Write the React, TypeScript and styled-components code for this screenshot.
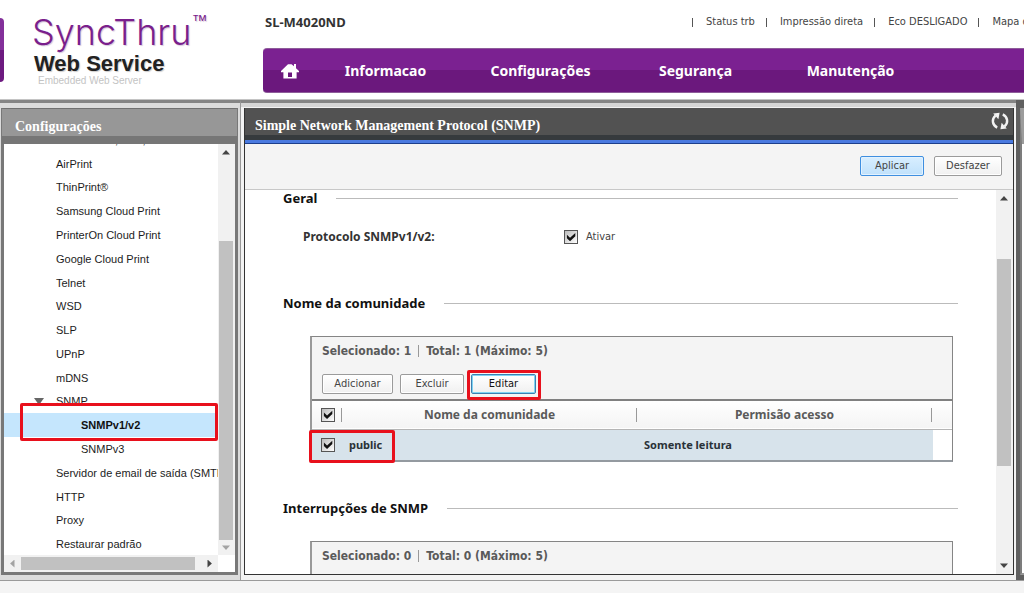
import React from "react";
import styled, { createGlobalStyle, css } from "styled-components";

const ui = `"DejaVu Sans Condensed", "Noto Sans", sans-serif`;
const uiBold = `"Noto Sans", "Open Sans", sans-serif`;

const GlobalStyle = createGlobalStyle`
  * { box-sizing: border-box; }
  body { margin: 0; background: #fff; color: #333; font: 11px/16px ${ui}; overflow: hidden; }
  h1, h2, h3, p, ul { margin: 0; padding: 0; font-size: inherit; font-weight: inherit; }
  ul { list-style: none; }
  a { color: inherit; text-decoration: none; }
`;

const Page = styled.div`
  height: 100vh;
  display: flex;
  flex-direction: column;
`;

/* Header */
const Header = styled.header`
  flex: none;
  height: 99px;
  display: flex;
`;

const EdgeTab = styled.div`
  width: 4px;
  height: 64px;
  margin-top: 18px;
  border-radius: 0 4px 4px 0;
  background: linear-gradient(#83309a 50%, #6d1a80 50%);
`;

const Brand = styled.div`
  width: 259px;
  padding: 12px 0 0 28px;
  font-family: "Liberation Sans", Arial, sans-serif;
`;

const BrandName = styled.div`
  display: flex;
  align-items: flex-start;
  font-family: "Inter", "Liberation Sans", sans-serif;
  font-weight: 300;
  font-size: 36px;
  line-height: 40px;
  color: #7a1f8c;
  text-shadow: 1px 1px 1px #d8c8dd;
  sup {
    font: 400 16px/18px "Liberation Sans", Arial, sans-serif;
  }
`;

const BrandService = styled.div`
  padding-left: 2px;
  font-size: 22px;
  line-height: 24px;
  font-weight: 700;
  color: #222;
  text-shadow: 1px 1px 1px #ccc;
`;

const BrandNote = styled.div`
  padding-left: 6px;
  font-size: 10px;
  line-height: 10px;
  color: #c4c4c4;
`;

const HeaderMain = styled.div`
  flex: 1;
  min-width: 0;
`;

const UtilityRow = styled.div`
  height: 48px;
  display: flex;
  align-items: center;
  justify-content: space-between;
  padding: 0 0 4px 2px;
`;

const Model = styled.h1`
  && { font: 700 13px/16px ${uiBold}; }
  color: #333;
`;

const UtilityLinks = styled.nav`
  width: 332px;
  display: flex;
  overflow: hidden;
  white-space: nowrap;
  color: #444;
  a {
    display: flex;
    align-items: center;
    margin-right: 11px;
  }
  a::before {
    content: "";
    width: 1px;
    height: 9px;
    margin-right: 13px;
    background: #555;
  }
`;

const MainNav = styled.nav`
  height: 45px;
  display: grid;
  grid-template-columns: 45px 155px 155px 155px 155px;
  align-items: center;
  border: solid #8d5c99;
  border-width: 1px 0;
  border-radius: 4px 0 0 4px;
  background: linear-gradient(#7b2191 0 50%, #6b187d 50% 100%);
  font: 700 14px/20px ${uiBold};
  color: #fff;
  text-align: center;
`;

const HomeLink = styled.a`
  display: flex;
  padding-left: 18px;
`;

/* Workspace */
const Workspace = styled.div`
  flex: 1;
  min-height: 0;
  display: flex;
  border-top: 1px solid #c4c4c4;
  border-bottom: 1px solid #9a9a9a;
  background: #dcdcdc;
`;

const SideFrame = styled.section`
  flex: none;
  width: 241px;
  display: flex;
  border-top: 3px solid #858585;
  border-right: 1px solid #999;
  padding: 5px 2px 5px 1px;
`;

const SidePanel = styled.div`
  flex: 1;
  min-width: 0;
  display: flex;
  flex-direction: column;
  border: 3px solid #787878;
  border-top: 1px solid #707070;
  background: #fff;
`;

const PanelTitle = styled.h2<{ $dark?: boolean }>`
  flex: none;
  display: flex;
  align-items: center;
  justify-content: space-between;
  color: #fff;
  && { font: 700 14px/18px "Liberation Serif", "Times New Roman", serif; }
  svg { align-self: flex-start; }
  ${p => p.$dark
    ? css`height: 36px; padding: 4px 4px 4px 10px; background: linear-gradient(#525252 0 27px, #363a3d 27px 32px, #4a7ae0 32px 35px, #1d3f8c 35px);`
    : css`height: 35px; padding: 8px 0 8px 13px; margin: 0 -2px; background: linear-gradient(#979797 0 27px, #767676 27px);`}
`;

const TreeView = styled.div`
  flex: 1;
  min-height: 0;
  display: grid;
  grid-template-columns: minmax(0, 1fr) 17px;
  grid-template-rows: minmax(0, 1fr) 17px;
`;

const TreeViewport = styled.div`
  min-height: 0;
  overflow: hidden;
`;

/* scrolled so that the first entry is almost out of view */
const Tree = styled.ul`
  && { margin-top: -16px; }
  height: calc(100% + 17px);
  display: grid;
  grid-template-columns: minmax(0, 1fr);
  grid-auto-rows: minmax(0, 1fr);
  font-family: "Liberation Sans", Arial, sans-serif;
  color: #1c1c1c;
  white-space: nowrap;
`;

const TreeItem = styled.li<{ $level?: number; $active?: boolean }>`
  position: relative;
  display: flex;
  align-items: center;
  padding-left: ${p => (p.$level === 2 ? 77 : 52)}px;
  ${p => p.$active && css`background: #c5e6fd; font-weight: 700; color: #111; z-index: 1;`}
`;

const Caret = styled.span`
  position: absolute;
  left: 30px;
  border: 5px solid transparent;
  border-top: 7px solid #666;
  border-bottom: 0;
`;

const Highlight = styled.span<{ $inset: string }>`
  position: absolute;
  z-index: 1;
  inset: ${p => p.$inset};
  border: 3px solid #e8101c;
  border-radius: 2px;
  pointer-events: none;
`;

/* Scroll bars */
const VBar = styled.div<{ $rows: string }>`
  display: grid;
  grid-template-rows: ${p => p.$rows};
  padding: 0 2px 0 1px;
  background: #f1f1f1;
`;

const HBar = styled.div`
  display: grid;
  grid-template-columns: 17px 174fr 6fr 17px;
  padding: 2px 0;
  background: #f1f1f1;
`;

const Thumb = styled.div`
  background: #c1c1c1;
`;

const Arrow = styled.span<{ $dir: "up" | "down" | "left" | "right"; $dim?: boolean }>`
  place-self: center;
  width: 8px;
  height: 8px;
  background: ${p => (p.$dim ? "#a3a3a3" : "#444")};
  clip-path: ${p => ({
    up: "polygon(0 75%, 50% 20%, 100% 75%)",
    down: "polygon(0 25%, 50% 80%, 100% 25%)",
    left: "polygon(75% 0, 20% 50%, 75% 100%)",
    right: "polygon(25% 0, 80% 50%, 25% 100%)",
  }[p.$dir])};
`;

/* Main panel */
const MainFrame = styled.main`
  flex: 1;
  min-width: 0;
  display: flex;
  border-top: 3px solid #858585;
  padding: 5px 2px 5px 3px;
  background: #f3f3f3 linear-gradient(#d6d6d6 0 4px, #f3f3f3 4px);
`;

const MainPanel = styled.div`
  flex: 1;
  min-width: 0;
  display: flex;
  flex-direction: column;
  border: 1px solid #333;
  border-top: 0;
  background: #fff;
`;

const Toolbar = styled.div`
  flex: none;
  height: 46px;
  display: flex;
  align-items: center;
  justify-content: flex-end;
  gap: 10px;
  padding: 0 11px 2px 0;
  border-bottom: 1px solid #c8c8c8;
  background: #f4f4f4;
`;

const Button = styled.button<{ $w: number; $kind?: "primary" | "focus" }>`
  width: ${p => p.$w}px;
  height: 20px;
  padding: 0;
  border: 1px solid #9b9b9b;
  border-radius: 2px;
  background: linear-gradient(#fff, #f0f0f0);
  box-shadow: inset 0 0 0 1px #fff;
  font: 11px/18px ${ui};
  color: #444;
  ${p => p.$kind === "primary" && css`
    border-color: #3f8fe0;
    background: linear-gradient(#d8eeff, #c0e1fb);
    box-shadow: inset 0 0 0 1px #e2f2ff;
  `}
  ${p => p.$kind === "focus" && css`
    border-color: #3c7fb1;
    box-shadow: inset 0 0 0 1px #7fd3f2;
    color: #111;
  `}
`;

const ContentArea = styled.div`
  flex: 1;
  min-height: 0;
  display: grid;
  grid-template-columns: minmax(0, 1fr) 17px;
`;

const Content = styled.div`
  min-height: 0;
  overflow: hidden;
  padding: 0 38px;
`;

const SectionHeading = styled.h3`
  display: flex;
  align-items: center;
  gap: 19px;
  && { font: 700 13px/16px ${uiBold}; }
  color: #111;
  &::after {
    content: "";
    flex: 1;
    height: 1px;
    background: #bbb;
  }
`;

const Field = styled.div`
  display: grid;
  grid-template-columns: 261px 1fr;
  align-items: center;
  padding: 23px 20px 50px;
`;

const FieldName = styled.span`
  font: 700 12px/16px ${uiBold};
  color: #333;
`;

const CheckLabel = styled.label`
  display: flex;
  align-items: center;
  gap: 8px;
  color: #444;
`;

const Check = styled.input.attrs({ type: "checkbox" })`
  appearance: none;
  flex: none;
  display: block;
  width: 14px;
  height: 14px;
  margin: 0;
  border: 1px solid #555;
  background: linear-gradient(135deg, #bbb, #fff);
  &:checked::before {
    content: "";
    display: block;
    width: 12px;
    height: 12px;
    background: #111;
    clip-path: polygon(16% 32%, 42% 56%, 86% 16%, 86% 44%, 42% 86%, 16% 60%);
  }
`;

const ListBox = styled.div`
  margin: 25px 5px 38px 27px;
  border: 1px solid #858585;
  border-left: 2px solid #999;
  border-bottom: 2px solid #949aa0;
`;

const ListTools = styled.div`
  display: flex;
  flex-direction: column;
  gap: 15px;
  padding: 6px 10px 5px;
  background: #f4f4f4;
  border-bottom: 2px solid #808080;
`;

const Summary = styled.p`
  display: flex;
  align-items: center;
  && { font: 700 12px/16px ${ui}; }
  color: #5a5a5a;
  span + span {
    margin-left: 7px;
    padding-left: 7px;
    border-left: 1px solid #999;
    line-height: 12px;
  }
`;

const Actions = styled.div`
  display: flex;
  gap: 7px;
`;

const Marked = styled.span`
  position: relative;
  display: flex;
`;

const DataTable = styled.table`
  width: 100%;
  table-layout: fixed;
  border-collapse: collapse;
  thead tr { height: 28px; background: linear-gradient(#fff, #f4f4f4); border-bottom: 1px solid #b5b5b5; }
  tbody tr { height: 31px; }
  th, td { padding: 0; }
  th {
    font: 700 12px/16px ${uiBold};
    color: #5a5a5a;
    background: linear-gradient(#999, #999) right center / 1px 14px no-repeat;
  }
  th:last-child { background: none; }
  th:first-child, td:first-child { padding-left: 9px; }
  td {
    position: relative;
    padding-left: 7px;
    background: #d7e3eb;
    font: 700 11px/16px ${uiBold};
    color: #2a3238;
  }
  td:last-child { background: linear-gradient(90deg, #d7e3eb 1px, #fff 1px); }
`;

const Col = styled.col<{ $w?: number }>`
  width: ${p => (p.$w ? `${p.$w}px` : "auto")};
`;

/* Right-hand panel, mostly beyond the window */
const NextFrame = styled.aside`
  flex: none;
  width: 8px;
  display: flex;
  padding: 5px 0 5px 4px;
  border-top: 3px solid #606060;
  background: #606060;
`;

const NextPanel = styled.div`
  flex: 1;
  border-top: 36px solid #9c9c9c;
  border-left: 2px solid #7c7c7c;
  border-bottom: 2px solid #999;
  background: #fff;
`;

const Footer = styled.footer`
  flex: none;
  height: 12px;
  background: #f4f4f4;
`;

const HomeIcon = () => (
  <svg width="18" height="16" viewBox="0 0 18 16" fill="#fff" fillRule="evenodd" aria-hidden="true">
    <path d="M7 1.200H10.500L13 3.200V1H15V5.200L18 8V9.200H15.600V15.600H2.400V9.200H0V8zM7 9.600V14H11V9.600z" />
  </svg>
);

const RefreshIcon = () => (
  <svg width="18" height="18" viewBox="0 0 18 18" fill="none" stroke="#f2f2f2" strokeWidth="2.4" aria-hidden="true">
    <path d="M6.200 15.600C1.200 13 .4 7.400 4.400 3.600" />
    <path d="M11.800 2.400C16.800 5 17.600 10.600 13.600 14.400" />
    <path d="M2.200 1.400 8.600 .8 7.400 7.200z" fill="#f2f2f2" stroke="none" />
    <path d="M15.800 16.600 9.400 17.200 10.600 10.800z" fill="#f2f2f2" stroke="none" />
  </svg>
);

type Entry = { text: string; level?: number; active?: boolean; open?: boolean };

const entries: Entry[] = [
  { text: "Raw TCP/IP, LPR, IPP" },
  { text: "AirPrint" },
  { text: "ThinPrint®" },
  { text: "Samsung Cloud Print" },
  { text: "PrinterOn Cloud Print" },
  { text: "Google Cloud Print" },
  { text: "Telnet" },
  { text: "WSD" },
  { text: "SLP" },
  { text: "UPnP" },
  { text: "mDNS" },
  { text: "SNMP", open: true },
  { text: "SNMPv1/v2", level: 2, active: true },
  { text: "SNMPv3", level: 2 },
  { text: "Servidor de email de saída (SMTP)" },
  { text: "HTTP" },
  { text: "Proxy" },
  { text: "Restaurar padrão" },
];

export default function App() {
  return (
    <Page>
      <GlobalStyle />
      <Header>
        <EdgeTab />
        <Brand>
          <BrandName>SyncThru<sup>™</sup></BrandName>
          <BrandService>Web Service</BrandService>
          <BrandNote>Embedded Web Server</BrandNote>
        </Brand>
        <HeaderMain>
          <UtilityRow>
            <Model>SL-M4020ND</Model>
            <UtilityLinks>
              <a href="#status">Status trb</a>
              <a href="#print">Impressão direta</a>
              <a href="#eco">Eco DESLIGADO</a>
              <a href="#map">Mapa do site</a>
            </UtilityLinks>
          </UtilityRow>
          <MainNav>
            <HomeLink href="#home" aria-label="Home"><HomeIcon /></HomeLink>
            <a href="#info">Informacao</a>
            <a href="#settings">Configurações</a>
            <a href="#security">Segurança</a>
            <a href="#maintenance">Manutenção</a>
          </MainNav>
        </HeaderMain>
      </Header>

      <Workspace>
        <SideFrame>
          <SidePanel>
            <PanelTitle>Configurações</PanelTitle>
            <TreeView>
              <TreeViewport>
                <Tree>
                  {entries.map(e => (
                    <TreeItem key={e.text} $level={e.level} $active={e.active}>
                      {e.open && <Caret />}
                      <a href="#entry">{e.text}</a>
                      {e.active && <Highlight $inset="-10px 0 -4px 16px" />}
                    </TreeItem>
                  ))}
                </Tree>
              </TreeViewport>
              <VBar $rows="17px 80fr 298fr 15px">
                <Arrow $dir="up" />
                <span />
                <Thumb />
                <Arrow $dir="down" $dim />
              </VBar>
              <HBar>
                <Arrow $dir="left" $dim />
                <Thumb />
                <span />
                <Arrow $dir="right" />
              </HBar>
            </TreeView>
          </SidePanel>
        </SideFrame>

        <MainFrame>
          <MainPanel>
            <PanelTitle $dark>
              Simple Network Management Protocol (SNMP)
              <RefreshIcon />
            </PanelTitle>
            <Toolbar>
              <Button $w={64} $kind="primary">Aplicar</Button>
              <Button $w={68}>Desfazer</Button>
            </Toolbar>
            <ContentArea>
              <Content>
                <SectionHeading>Geral</SectionHeading>
                <Field>
                  <FieldName>Protocolo SNMPv1/v2:</FieldName>
                  <CheckLabel><Check defaultChecked />Ativar</CheckLabel>
                </Field>
                <SectionHeading>Nome da comunidade</SectionHeading>
                <ListBox>
                  <ListTools>
                    <Summary><span>Selecionado: 1</span><span>Total: 1 (Máximo: 5)</span></Summary>
                    <Actions>
                      <Button $w={71}>Adicionar</Button>
                      <Button $w={64}>Excluir</Button>
                      <Marked>
                        <Button $w={65} $kind="focus">Editar</Button>
                        <Highlight $inset="-4px -5px -6px -4px" />
                      </Marked>
                    </Actions>
                  </ListTools>
                  <DataTable>
                    <colgroup>
                      <Col $w={30} />
                      <Col />
                      <Col />
                      <Col $w={20} />
                    </colgroup>
                    <thead>
                      <tr>
                        <th><Check defaultChecked aria-label="Selecionar tudo" /></th>
                        <th>Nome da comunidade</th>
                        <th>Permisão acesso</th>
                        <th />
                      </tr>
                    </thead>
                    <tbody>
                      <tr>
                        <td>
                          <Check defaultChecked aria-label="public" />
                          <Highlight $inset="0 -53px -3px -3px" />
                        </td>
                        <td>public</td>
                        <td>Somente leitura</td>
                        <td />
                      </tr>
                    </tbody>
                  </DataTable>
                </ListBox>
                <SectionHeading>Interrupções de SNMP</SectionHeading>
                <ListBox>
                  <ListTools>
                    <Summary><span>Selecionado: 0</span><span>Total: 0 (Máximo: 5)</span></Summary>
                    <Actions />
                  </ListTools>
                </ListBox>
              </Content>
              <VBar $rows="17px 52fr 207fr 91fr 17px">
                <Arrow $dir="up" />
                <span />
                <Thumb />
                <span />
                <Arrow $dir="down" />
              </VBar>
            </ContentArea>
          </MainPanel>
        </MainFrame>

        <NextFrame><NextPanel /></NextFrame>
      </Workspace>
      <Footer />
    </Page>
  );
}
